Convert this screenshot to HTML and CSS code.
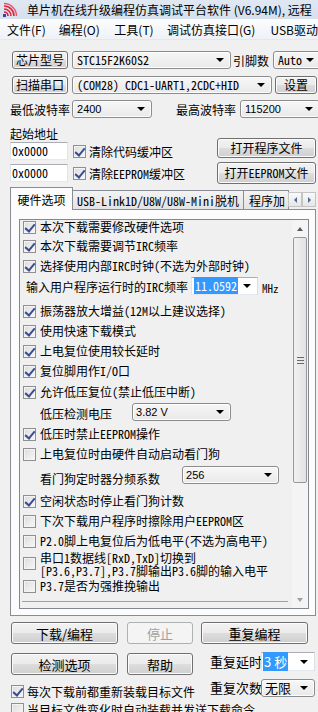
FILE: index.html
```html
<!DOCTYPE html>
<html lang="zh-CN">
<head>
<meta charset="utf-8">
<title>STC-ISP</title>
<link rel="stylesheet" href="styles.css">
</head>
<body>
<div class="titlebar">
  <svg class="appicon" viewBox="0 0 16 16" width="16" height="16">
    <path d="M2 4 A10 10 0 0 1 12 14" fill="none" stroke="#e0263f" stroke-width="1.6"/>
    <path d="M2 1.5 A12.5 12.5 0 0 1 14.5 14" fill="none" stroke="#ef4f6a" stroke-width="1.4"/>
    <path d="M2 7 A7 7 0 0 1 9 14" fill="none" stroke="#e0263f" stroke-width="1.6"/>
    <path d="M2 10 A4 4 0 0 1 6 14" fill="none" stroke="#d81e3a" stroke-width="1.6"/>
    <rect x="1" y="12" width="3" height="3" fill="#3a3fb8"/>
  </svg>
  <span class="title">单片机在线升级编程仿真调试平台软件 (V6.94M), 远程</span>
</div>
<div class="menubar">
  <span class="mi m1">文件(F)</span>
  <span class="mi m2">编程(O)</span>
  <span class="mi m3">工具(T)</span>
  <span class="mi m4">调试仿真接口(G)</span>
  <span class="mi m5">USB驱动</span>
</div>

<div class="main">
  <div class="row r1">
    <div class="btn b-chip">芯片型号</div>
    <div class="combo dd c-chip"><span class="val mono">STC15F2K60S2</span><i class="arr"></i></div>
    <span class="lbl l-pin">引脚数</span>
    <div class="combo dd c-pin"><span class="val mono">Auto</span><i class="arr"></i></div>
  </div>
  <div class="row r2">
    <div class="btn b-scan">扫描串口</div>
    <div class="combo dd c-port"><span class="val mono">(COM28) CDC1-UART1,2CDC+HID</span><i class="arr"></i></div>
    <div class="btn b-set">设置</div>
  </div>
  <div class="row r3">
    <span class="lbl">最低波特率</span>
    <div class="combo dd c-min"><span class="val sans">2400</span><i class="arr"></i></div>
    <span class="lbl l-max">最高波特率</span>
    <div class="combo dd c-max"><span class="val sans">115200</span><i class="arr"></i></div>
  </div>
  <div class="addr-label">起始地址</div>
  <div class="row r4">
    <div class="input mono">0x0000</div>
    <span class="cb on"></span><span class="cbt">清除代码缓冲区</span>
    <div class="btn b-open">打开程序文件</div>
  </div>
  <div class="row r5">
    <div class="input mono">0x0000</div>
    <span class="cb on"></span><span class="cbt">清除<span class="mono">EEPROM</span>缓冲区</span>
    <div class="btn b-open2">打开<span class="mono">EEPROM</span>文件</div>
  </div>

  <div class="tabs">
    <div class="tab sel">硬件选项</div>
    <div class="tab t2"><span class="mono">USB-Link1D/U8W/U8W-Mini</span>脱机</div>
    <div class="tab t3">程序加</div>
    <div class="tabarrows">
      <div class="ta"><i class="tl"></i></div>
      <div class="ta"><i class="tr"></i></div>
    </div>
  </div>
  <div class="panel">
    <div class="listbox">
      <div class="items mono">
        <div class="it first"><span class="cb on"></span><span>本次下载需要修改硬件选项</span></div>
        <div class="it"><span class="cb on"></span><span>本次下载需要调节IRC频率</span></div>
        <div class="it"><span class="cb on"></span><span>选择使用内部IRC时钟(不选为外部时钟)</span></div>
        <div class="it combo-row irc">
          <span class="clbl">输入用户程序运行时的IRC频率</span>
          <div class="combo ed c-irc"><span class="val"><span class="hl">11.0592</span></span><i class="arr"></i></div>
          <span class="unit">MHz</span>
        </div>
        <div class="it"><span class="cb on"></span><span>振荡器放大增益(12M以上建议选择)</span></div>
        <div class="it"><span class="cb on"></span><span>使用快速下载模式</span></div>
        <div class="it"><span class="cb on"></span><span>上电复位使用较长延时</span></div>
        <div class="it"><span class="cb on"></span><span>复位脚用作I/O口</span></div>
        <div class="it i9"><span class="cb on"></span><span>允许低压复位(禁止低压中断)</span></div>
        <div class="it combo-row lvd">
          <span class="clbl2">低压检测电压</span>
          <div class="combo dd c-lvd"><span class="val">3.82 V</span><i class="arr"></i></div>
        </div>
        <div class="it"><span class="cb on"></span><span>低压时禁止EEPROM操作</span></div>
        <div class="it"><span class="cb"></span><span>上电复位时由硬件自动启动看门狗</span></div>
        <div class="it combo-row wdt">
          <span class="clbl2">看门狗定时器分频系数</span>
          <div class="combo dd c-wdt"><span class="val">256</span><i class="arr"></i></div>
        </div>
        <div class="it"><span class="cb on"></span><span>空闲状态时停止看门狗计数</span></div>
        <div class="it"><span class="cb"></span><span>下次下载用户程序时擦除用户EEPROM区</span></div>
        <div class="it"><span class="cb"></span><span>P2.0脚上电复位后为低电平(不选为高电平)</span></div>
        <div class="it two"><span class="cb"></span><span class="twotxt">串口1数据线[RxD,TxD]切换到<br>[P3.6,P3.7],P3.7脚输出P3.6脚的输入电平</span></div>
        <div class="it"><span class="cb"></span><span>P3.7是否为强推挽输出</span></div>
        <div class="sep"></div>
      </div>
      <div class="vscroll">
        <div class="sbtn"><i class="up"></i></div>
        <div class="thumb"><i class="grip"></i></div>
        <div class="track"></div>
        <div class="sbtn"><i class="down"></i></div>
      </div>
    </div>
  </div>

  <div class="brow b1">
    <div class="btn bb-dl">下载/编程</div>
    <div class="btn bb-stop dis">停止</div>
    <div class="btn bb-rep">重复编程</div>
  </div>
  <div class="bottom">
    <div class="bleft">
      <div class="brow b2">
        <div class="btn bb-dl">检测选项</div>
        <div class="btn bb-stop">帮助</div>
      </div>
      <div class="chk-row"><span class="cb on"></span><span>每次下载前都重新装载目标文件</span></div>
      <div class="chk-row c2"><span class="cb"></span><span>当目标文件变化时自动装载并发送下载命令</span></div>
    </div>
    <div class="bright">
      <div class="rrow"><span class="rl">重复延时</span><div class="combo ed c-delay"><span class="val"><span class="hl">3 秒</span></span><i class="arr"></i></div></div>
      <div class="rrow rr2"><span class="rl">重复次数</span><div class="combo dd c-cnt"><span class="val">无限</span><i class="arr"></i></div></div>
    </div>
  </div>
</div>
</body>
</html>
```
FILE: styles.css
```css
* { box-sizing: border-box; }
html, body { margin: 0; padding: 0; }
body {
  width: 318px;
  height: 712px;
  overflow: hidden;
  background: #f0f0f0;
  font-family: "Noto Sans CJK SC", sans-serif;
  font-size: 12px;
  color: #000;
  white-space: nowrap;
}
.mono { font-family: "Noto Sans Mono CJK SC", "Noto Sans CJK SC", "Liberation Mono", monospace; }
.sans { font-family: "Liberation Sans", sans-serif; font-size: 11px; }

/* title + menu */
.titlebar {
  height: 19px;
  display: flex;
  align-items: center;
  padding-left: 2px;
  background: linear-gradient(#e0e8f2, #d5e0ed);
}
.appicon { flex: none; }
.title { margin-left: 9px; line-height: 19px; color: #000; }
.menubar {
  height: 21px;
  display: flex;
  align-items: center;
  background: linear-gradient(#fbfcfd, #eef2f7);
  border-bottom: 1px solid #e4e8ee;
}
.mi { display: block; line-height: 21px; }
.m1 { margin-left: 7px; width: 52px; }
.m2 { width: 56px; }
.m3 { width: 53px; }
.m4 { width: 104px; }

/* generic controls */
.main { padding-left: 10px; }
.row { display: flex; align-items: center; }
.btn {
  flex: none;
  height: 18px;
  border: 1px solid #707070;
  border-radius: 3px;
  background: linear-gradient(#f2f2f2 0%, #ebebeb 48%, #dddddd 52%, #cfcfcf 100%);
  box-shadow: inset 0 0 0 1px #fbfbfb;
  display: flex;
  align-items: center;
  justify-content: center;
  line-height: 1;
}
.btn.dis {
  border-color: #adb2b5;
  background: #f4f4f4;
  box-shadow: none;
  color: #a0a0a0;
}
.combo {
  flex: none;
  height: 18px;
  display: flex;
  align-items: center;
  position: relative;
}
.combo.dd {
  border: 1px solid #8c8c8c;
  border-radius: 3px;
  background: linear-gradient(#f7f7f7, #e9e9e9);
  box-shadow: inset 0 0 0 1px #fdfdfd;
}
.combo.ed {
  border: 1px solid #abadb3;
  border-color: #abadb3 #dbdfe6 #e3e9ef #e2e3ea;
  background: #fff;
}
.val { padding-left: 4px; flex: 1; line-height: 14px; }
.arr {
  display: block;
  flex: none;
  width: 0;
  height: 0;
  border-left: 4px solid transparent;
  border-right: 4px solid transparent;
  border-top: 4px solid #000;
  margin-right: 6px;
}
.hl { background: #3399ff; color: #fff; padding: 0 1px; }
.input {
  flex: none;
  width: 58px;
  height: 18px;
  background: #fff;
  border: 1px solid #abadb3;
  border-color: #abadb3 #e2e3ea #e3e9ef #e2e3ea;
  line-height: 16px;
  padding-left: 1px;
}
.lbl { flex: none; }

/* checkbox */
.cb {
  flex: none;
  width: 13px;
  height: 13px;
  border: 1px solid #8e8f8f;
  background: linear-gradient(135deg, #dcdcdc, #f8f8f8);
  box-shadow: inset 0 0 0 1px #f4f4f4;
  position: relative;
  display: inline-block;
}
.cb.on::after {
  content: "";
  position: absolute;
  left: 3px;
  top: 0px;
  width: 4px;
  height: 8px;
  border-right: 2px solid #3a4d8f;
  border-bottom: 2px solid #3a4d8f;
  transform: rotate(40deg);
}

/* row 1-3 */
.r1 { margin-top: 11px; height: 18px; }
.b-chip { margin-left: 2px; width: 56px; }
.c-chip { margin-left: 4px; width: 159px; }
.l-pin { margin-left: 2px; width: 37px; }
.c-pin { margin-left: 3px; width: 48px; }
.r2 { margin-top: 7px; height: 18px; }
.b-scan { margin-left: 2px; width: 56px; }
.c-port { margin-left: 4px; width: 200px; }
.b-set { margin-left: 3px; width: 42px; }
.r3 { margin-top: 6px; height: 18px; }
.c-min { margin-left: 2px; width: 80px; }
.l-max { margin-left: 24px; }
.c-max { margin-left: 4px; width: 80px; }
.addr-label { margin-top: 9px; height: 14px; line-height: 14px; }
.r4 { height: 20px; }
.r4 .cb, .r5 .cb { margin-left: 5px; }
.cbt { margin-left: 3px; }
.b-open { margin-left: auto; margin-right: 2px; width: 99px; height: 20px; align-self: flex-start; margin-top: -3px; }
.r5 { height: 20px; margin-top: 2px; }
.b-open2 { margin-left: auto; margin-right: 2px; width: 99px; height: 22px; }

/* tabs */
.tabs {
  margin-top: 4px;
  height: 22px;
  display: flex;
  align-items: flex-end;
  position: relative;
  z-index: 1;
}
.tab {
  flex: none;
  height: 19px;
  border: 1px solid #898c95;
  border-bottom: none;
  background: linear-gradient(#f3f3f3, #e3e3e3);
  display: flex;
  align-items: center;
  justify-content: center;
  margin-left: -1px;
}
.tab.sel {
  margin-left: 0;
  height: 23px;
  margin-bottom: -1px;
  width: 63px;
  background: #fcfcfc;
}
.t2 { width: 172px; }
.t3 { width: 46px; overflow: hidden; justify-content: flex-start; padding-left: 5px; }
.tabarrows { display: flex; margin-bottom: 2px; margin-left: -1px; }
.ta {
  width: 14px;
  height: 15px;
  border: 1px solid #c4c4c4;
  background: linear-gradient(#fafafa, #e6e6e6);
  display: flex;
  align-items: center;
  justify-content: center;
}
.tl { display: block; width: 0; height: 0; border-top: 3px solid transparent; border-bottom: 3px solid transparent; border-right: 3px solid #4d6a9a; }
.tr { display: block; width: 0; height: 0; border-top: 3px solid transparent; border-bottom: 3px solid transparent; border-left: 3px solid #4d6a9a; }

.panel {
  width: 306px;
  height: 407px;
  border: 1px solid #898c95;
  background: #fcfcfc;
  padding: 9px 0 0 8px;
}
.listbox {
  width: 290px;
  height: 390px;
  border: 1px solid #828790;
  background: #f0f0f0;
  display: flex;
}
.items {
  flex: 1;
  font-size: 12px;
  line-height: 14px;
}
.it {
  height: 20px;
  display: flex;
  align-items: center;
  padding-left: 3px;
}
.it.first { height: 16px; align-items: flex-start; }
.it.first .cb { margin-top: 1px; }
.it .cb { margin-right: 4px; }
.combo-row .combo { height: 18px; }
.irc { height: 25px; align-items: flex-start; }
.irc .clbl { margin-left: 3px; margin-top: 4px; }
.c-irc { margin-left: 3px; width: 67px; margin-top: 1px; }
.c-irc .val { padding-left: 2px; }
.unit { margin-left: 4px; margin-top: 5px; font-size: 11px; }
.i9 { height: 22px; }
.lvd { height: 21px; align-items: flex-start; }
.clbl2 { margin-left: 17px; margin-top: 4px; }
.c-lvd { margin-left: 20px; width: 99px; }
.wdt { height: 27px; align-items: flex-start; padding-top: 2px; }
.wdt .clbl2 { margin-top: 6px; }
.c-wdt { margin-left: 22px; width: 97px; height: 17px; }
.c-lvd .val, .c-wdt .val { padding-left: 3px; font-family: "Liberation Sans", sans-serif; font-size: 11px; }
.two { height: 25px; }
.twotxt { line-height: 13px; font-size: 12px; }
.sep {
  margin: 5px 0 0 2px;
  height: 1px;
  width: 266px;
  background: #a0a0a0;
}
.vscroll {
  flex: none;
  width: 17px;
  display: flex;
  flex-direction: column;
  background: #f4f4f4;
  border-left: 1px solid #f0f0f0;
}
.sbtn {
  flex: none;
  height: 17px;
  display: flex;
  align-items: center;
  justify-content: center;
}
.up { display: block; width: 0; height: 0; border-left: 3.5px solid transparent; border-right: 3.5px solid transparent; border-bottom: 4px solid #5a5a5a; }
.down { display: block; width: 0; height: 0; border-left: 3.5px solid transparent; border-right: 3.5px solid transparent; border-top: 4px solid #a0a0a0; }
.thumb {
  flex: none;
  height: 246px;
  margin: 0 1px;
  border: 1px solid #979797;
  border-radius: 2px;
  background: linear-gradient(90deg, #f2f2f2, #e2e2e2);
  display: flex;
  align-items: center;
  justify-content: center;
}
.grip {
  display: block;
  width: 7px;
  height: 7px;
  background: repeating-linear-gradient(#6a6a6a 0 1px, transparent 1px 3px);
}
.track { flex: 1; }

/* bottom */
.brow { display: flex; }
.b1 { margin-top: 6px; height: 22px; }
.brow .btn { height: 22px; font-size: 13px; }
.bb-dl { margin-left: 1px; width: 107px; }
.bb-stop { margin-left: 9px; width: 66px; }
.bb-rep { margin-left: 8px; width: 107px; }
.bottom { display: flex; margin-top: 9px; }
.bleft { width: 195px; }
.b2 { height: 22px; }
.chk-row {
  margin-top: 9px;
  display: flex;
  align-items: center;
  height: 14px;
  font-size: 12px;
}
.chk-row .cb { margin-left: 1px; margin-right: 3px; }
.chk-row.c2 { margin-top: 4px; }
.bright { margin-left: 5px; margin-top: -1px; }
.rrow { display: flex; align-items: center; height: 19px; font-size: 13px; }
.rl { width: 51px; }
.c-delay { width: 54px; height: 19px; }
.c-delay .val { padding-left: 1px; }
.rr2 { margin-top: 7px; }
.c-cnt { width: 54px; height: 18px; }
.c-cnt .val { padding-left: 3px; }
```
